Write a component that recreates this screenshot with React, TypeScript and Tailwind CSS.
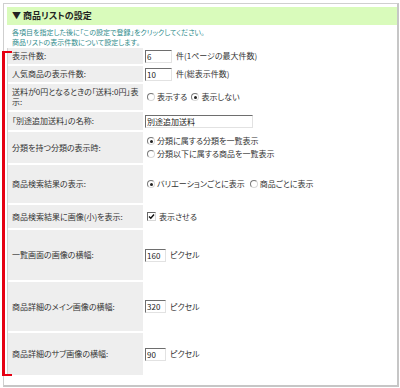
import React from 'react';

type Row = {
  label: React.ReactNode;
  h: string;
  value: React.ReactNode;
};

function Field({ value, w }: { value: string; w: string }) {
  return (
    <input
      readOnly
      value={value}
      className={`${w} h-[13px] border border-t-[#6e6e6e] border-l-[#6e6e6e] border-r-[#e2e2e2] border-b-[#e2e2e2] bg-white px-[1px] text-[8px] leading-[11px] text-[#222] outline-none`}
    />
  );
}

function Radio({ on }: { on?: boolean }) {
  return (
    <span className="flex h-[8px] w-[8px] shrink-0 items-center justify-center rounded-full border border-t-[#7a7a7a] border-l-[#7a7a7a] border-r-[#d8d8d8] border-b-[#d8d8d8] bg-white">
      {on && <span className="h-[3px] w-[3px] rounded-full bg-[#222]" />}
    </span>
  );
}

function Check() {
  return (
    <span className="flex h-[9px] w-[9px] shrink-0 items-center justify-center border border-t-[#6a6a6a] border-l-[#6a6a6a] border-r-[#d8d8d8] border-b-[#d8d8d8] bg-white">
      <svg viewBox="0 0 7 7" className="h-[7px] w-[7px]">
        <path d="M1 3.5 L2.8 5.3 L6 1.5" fill="none" stroke="#111" strokeWidth="1.4" />
      </svg>
    </span>
  );
}

export default function App() {
  const rows: Row[] = [
    {
      label: '表示件数:',
      h: 'h-[16px]',
      value: (
        <div className="flex items-center gap-[4px]">
          <Field value="6" w="w-[27px]" />
          <span>件(1ページの最大件数)</span>
        </div>
      ),
    },
    {
      label: '人気商品の表示件数:',
      h: 'h-[16px]',
      value: (
        <div className="flex items-center gap-[4px]">
          <Field value="10" w="w-[27px]" />
          <span>件(総表示件数)</span>
        </div>
      ),
    },
    {
      label: (
        <>
          送料が0円となるときの「送料:0円」表
          <br />
          示:
        </>
      ),
      h: 'h-[26px]',
      value: (
        <div className="flex items-center pl-[2px]">
          <Radio />
          <span className="ml-[2px]">表示する</span>
          <span className="ml-[4px]">
            <Radio on />
          </span>
          <span className="ml-[2px]">表示しない</span>
        </div>
      ),
    },
    {
      label: '「別途追加送料」の名称:',
      h: 'h-[18px]',
      value: <Field value="別途追加送料" w="w-[108px]" />,
    },
    {
      label: '分類を持つ分類の表示時:',
      h: 'h-[31px]',
      value: (
        <div className="flex flex-col gap-[3px] pl-[2px]">
          <div className="flex items-center gap-[2px]">
            <Radio on />
            <span>分類に属する分類を一覧表示</span>
          </div>
          <div className="flex items-center gap-[2px]">
            <Radio />
            <span>分類以下に属する商品を一覧表示</span>
          </div>
        </div>
      ),
    },
    {
      label: '商品検索結果の表示:',
      h: 'h-[38px]',
      value: (
        <div className="flex items-center pl-[2px]">
          <Radio on />
          <span className="ml-[2px]">バリエーションごとに表示</span>
          <span className="ml-[5px]">
            <Radio />
          </span>
          <span className="ml-[2px]">商品ごとに表示</span>
        </div>
      ),
    },
    {
      label: '商品検索結果に画像(小)を表示:',
      h: 'h-[23px]',
      value: (
        <div className="flex items-center gap-[3px] pl-[2px]">
          <Check />
          <span>表示させる</span>
        </div>
      ),
    },
    {
      label: '一覧画面の画像の横幅:',
      h: 'h-[50px]',
      value: (
        <div className="flex items-center gap-[4px]">
          <Field value="160" w="w-[21px]" />
          <span>ピクセル</span>
        </div>
      ),
    },
    {
      label: '商品詳細のメイン画像の横幅:',
      h: 'h-[49px]',
      value: (
        <div className="flex items-center gap-[4px]">
          <Field value="320" w="w-[21px]" />
          <span>ピクセル</span>
        </div>
      ),
    },
    {
      label: '商品詳細のサブ画像の横幅:',
      h: 'h-[42px]',
      value: (
        <div className="flex items-center gap-[4px]">
          <Field value="90" w="w-[21px]" />
          <span>ピクセル</span>
        </div>
      ),
    },
  ];

  return (
    <div className="relative h-[388px] w-[400px] overflow-hidden bg-white pt-[3px] pl-[3px] font-['Noto_Sans_CJK_JP',sans-serif] text-[#333] [font-feature-settings:'palt']">
      <div className="h-[384px] w-[396px] border-t border-l border-r-2 border-b-2 border-t-[#cfcfcf] border-l-[#cfcfcf] border-r-[#c6c6c6] border-b-[#c6c6c6] pt-[3px] pl-[3px]">
        <div className="flex h-[18px] items-center bg-[#d9fbbb] pl-[5px] text-[9px] font-bold text-[#222]">
          ▼ 商品リストの設定
        </div>

        <div className="mt-[2px] pl-[5px] text-[7px] leading-[10px] text-[#2f8c8c]">
          <p>各項目を指定した後に「この設定で登録」をクリックしてください。</p>
          <p>商品リストの表示件数について設定します。</p>
        </div>

        <div className="mt-[1px] flex flex-col gap-[2px] border-l border-[#d4d4d4]">
          {rows.map((r, i) => (
            <div key={i} className={`flex ${r.h}`}>
              <div className="flex w-[135px] shrink-0 items-center bg-[#eeeeee] pl-[4px] text-[8px] leading-[10px] text-[#333]">
                <div>{r.label}</div>
              </div>
              <div className="ml-[2px] flex flex-1 items-center text-[8px] leading-[10px] text-[#333]">
                {r.value}
              </div>
            </div>
          ))}
        </div>
      </div>

      {/* red annotation bracket */}
      <div className="absolute top-[51px] left-[2px] h-[325px] w-[10px] border-y-2 border-l-[3px] border-[#e60012]" />
    </div>
  );
}
